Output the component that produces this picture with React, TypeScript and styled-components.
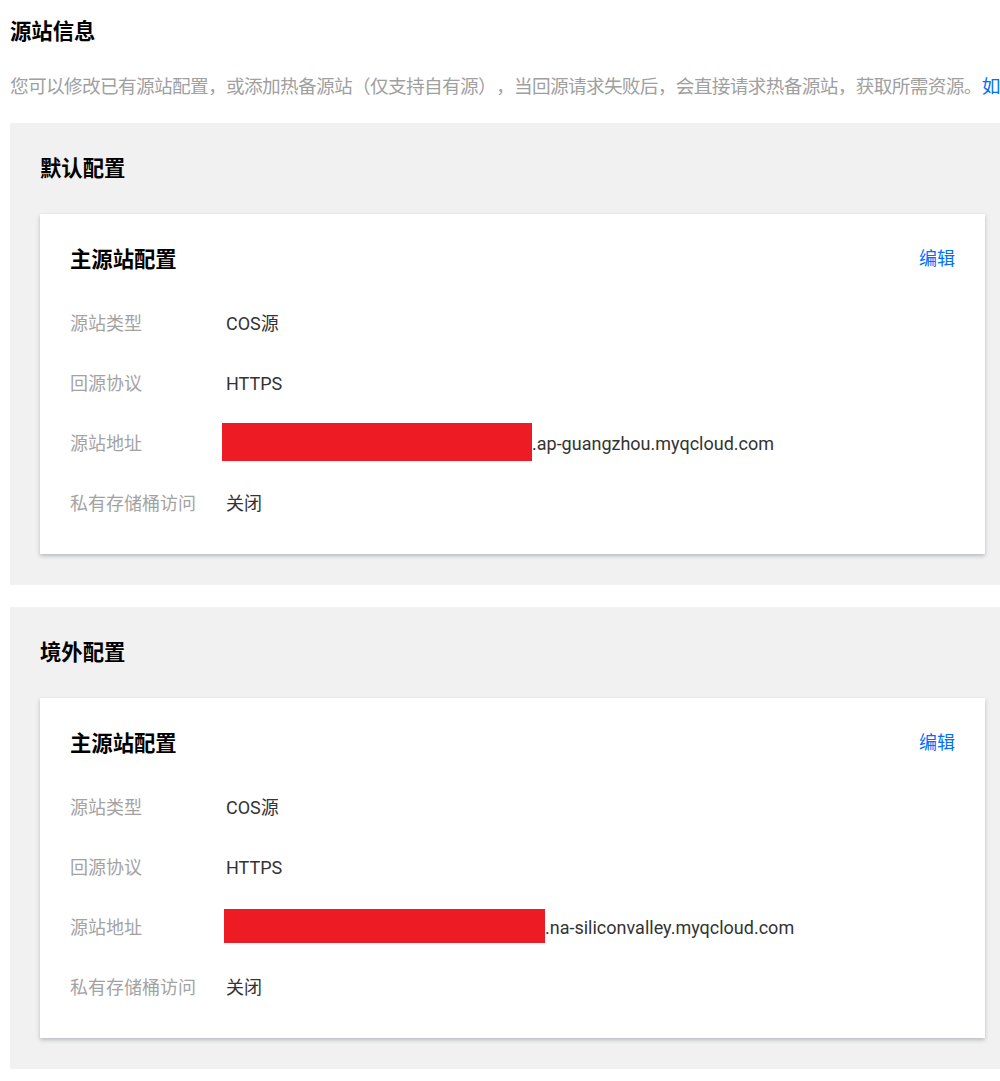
import React from "react";
import styled, { createGlobalStyle } from "styled-components";

const Global = createGlobalStyle`
  html, body { margin: 0; padding: 0; background: #fff; overflow: hidden; }
  body {
    font-family: Roboto, "Noto Sans CJK SC", "Liberation Sans", sans-serif;
    text-spacing-trim: space-all;
  }
  * { box-sizing: border-box; }
`;

const Page = styled.div`
  width: 1000px;
  overflow: hidden;
  padding: 16px 0 0 10px;
`;

const Title = styled.h2`
  margin: 0;
  font-size: 21.33px;
  line-height: 32px;
  font-weight: 700;
  color: #000;
`;

const Desc = styled.p`
  margin: 23px 0 0;
  font-size: 18.67px;
  line-height: 32px;
  letter-spacing: -0.66px;
  color: #a0a0a0;
  white-space: nowrap;
  text-spacing-trim: space-all;
`;

const Link = styled.a`
  color: #006eff;
  text-decoration: none;
`;

const Panel = styled.section<{ $first?: boolean }>`
  width: 1005px;
  margin-top: ${(p) => (p.$first ? "20px" : "22px")};
  background: #f1f1f1;
  padding: 30px 30px 31px;
`;

const PanelTitle = styled.h3`
  margin: 0;
  font-size: 21.33px;
  line-height: 32px;
  font-weight: 700;
  color: #000;
`;

const Card = styled.div`
  margin-top: 29px;
  background: #fff;
  padding: 30px 30px 20px;
  box-shadow: 0 2px 4px rgba(54, 58, 80, 0.3);
`;

const CardHead = styled.div`
  display: flex;
  justify-content: space-between;
  align-items: flex-start;
  height: 32px;
`;

const CardTitle = styled.h4`
  margin: 0;
  font-size: 21.33px;
  line-height: 32px;
  font-weight: 700;
  color: #000;
`;

const EditLink = styled.a`
  font-size: 18px;
  line-height: 30px;
  color: #006eff;
  text-decoration: none;
  cursor: pointer;
`;

const Rows = styled.div`
  margin-top: 18px;
  display: grid;
  grid-template-columns: 156px 1fr;
  grid-auto-rows: 60px;
  align-items: center;
  font-size: 18px;
  line-height: 24px;
`;

const Label = styled.div`
  color: #a3a3a3;
  white-space: nowrap;
`;

const Value = styled.div`
  color: #333;
  display: flex;
  align-items: center;
  white-space: nowrap;
`;

const Redact = styled.span<{ $w: number; $h: number; $shift: number }>`
  display: inline-block;
  width: ${(p) => p.$w}px;
  height: ${(p) => p.$h}px;
  margin-left: ${(p) => -p.$shift}px;
  transform: translateY(-2px);
  background: #ed1c24;
`;

type Cfg = {
  name: string;
  host: string;
  red: { w: number; h: number; shift: number };
};

const configs: Cfg[] = [
  { name: "默认配置", host: ".ap-guangzhou.myqcloud.com", red: { w: 310, h: 38, shift: 4 } },
  { name: "境外配置", host: ".na-siliconvalley.myqcloud.com", red: { w: 321, h: 34, shift: 2 } },
];

export default function App() {
  return (
    <>
      <Global />
      <Page>
        <Title>源站信息</Title>
        <Desc>
          您可以修改已有源站配置，或添加热备源站（仅支持自有源），当回源请求失败后，会直接请求热备源站，获取所需资源。
          <Link>如何配置热备源站</Link>
        </Desc>
        {configs.map((c, i) => (
          <Panel key={c.name} $first={i === 0}>
            <PanelTitle>{c.name}</PanelTitle>
            <Card>
              <CardHead>
                <CardTitle>主源站配置</CardTitle>
                <EditLink>编辑</EditLink>
              </CardHead>
              <Rows>
                <Label>源站类型</Label>
                <Value>COS源</Value>
                <Label>回源协议</Label>
                <Value>HTTPS</Value>
                <Label>源站地址</Label>
                <Value>
                  <Redact $w={c.red.w} $h={c.red.h} $shift={c.red.shift} />
                  {c.host}
                </Value>
                <Label>私有存储桶访问</Label>
                <Value>关闭</Value>
              </Rows>
            </Card>
          </Panel>
        ))}
      </Page>
    </>
  );
}
